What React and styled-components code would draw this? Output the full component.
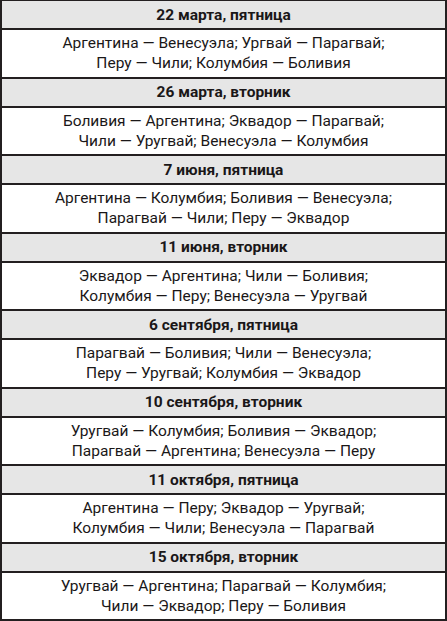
import * as React from "react";
import styled, { createGlobalStyle } from "styled-components";

const GlobalStyle = createGlobalStyle`
  html, body {
    margin: 0;
    padding: 0;
    background: #ffffff;
  }
  body {
    font-family: "Roboto", "Liberation Sans", sans-serif;
  }
`;

const schedule = [
  {
    date: "22 марта, пятница",
    lines: ["Аргентина — Венесуэла; Ургвай — Парагвай;", "Перу — Чили; Колумбия — Боливия"],
  },
  {
    date: "26 марта, вторник",
    lines: ["Боливия — Аргентина; Эквадор — Парагвай;", "Чили — Уругвай; Венесуэла — Колумбия"],
  },
  {
    date: "7 июня, пятница",
    lines: ["Аргентина — Колумбия; Боливия — Венесуэла;", "Парагвай — Чили; Перу — Эквадор"],
  },
  {
    date: "11 июня, вторник",
    lines: ["Эквадор — Аргентина; Чили — Боливия;", "Колумбия — Перу; Венесуэла — Уругвай"],
  },
  {
    date: "6 сентября, пятница",
    lines: ["Парагвай — Боливия; Чили — Венесуэла;", "Перу — Уругвай; Колумбия — Эквадор"],
  },
  {
    date: "10 сентября, вторник",
    lines: ["Уругвай — Колумбия; Боливия — Эквадор;", "Парагвай — Аргентина; Венесуэла — Перу"],
  },
  {
    date: "11 октября, пятница",
    lines: ["Аргентина — Перу; Эквадор — Уругвай;", "Колумбия — Чили; Венесуэла — Парагвай"],
  },
  {
    date: "15 октября, вторник",
    lines: ["Уругвай — Аргентина; Парагвай — Колумбия;", "Чили — Эквадор; Перу — Боливия"],
  },
];

const Table = styled.div`
  width: 447px;
  box-sizing: border-box;
  border: 2px solid #231f20;
  border-top-width: 1px;
  display: flex;
  flex-direction: column;
  color: #1a1718;
`;

const DateRow = styled.div`
  height: 27px;
  display: flex;
  align-items: center;
  justify-content: center;
  background: #e6e6e6;
  border-bottom: 2px solid #231f20;
  font-size: 15.5px;
  font-weight: 700;
`;

const MatchRow = styled.div`
  height: 46.5px;
  display: flex;
  flex-direction: column;
  justify-content: center;
  align-items: center;
  border-bottom: ${({ $last }) => ($last ? "none" : "2px solid #231f20")};
  font-size: 15.5px;
  line-height: 20px;
`;

export default function App() {
  return (
    <>
      <GlobalStyle />
      <Table>
        {schedule.map((day, i) => (
          <React.Fragment key={day.date}>
            <DateRow>{day.date}</DateRow>
            <MatchRow $last={i === schedule.length - 1}>
              {day.lines.map((line) => (
                <span key={line}>{line}</span>
              ))}
            </MatchRow>
          </React.Fragment>
        ))}
      </Table>
    </>
  );
}
